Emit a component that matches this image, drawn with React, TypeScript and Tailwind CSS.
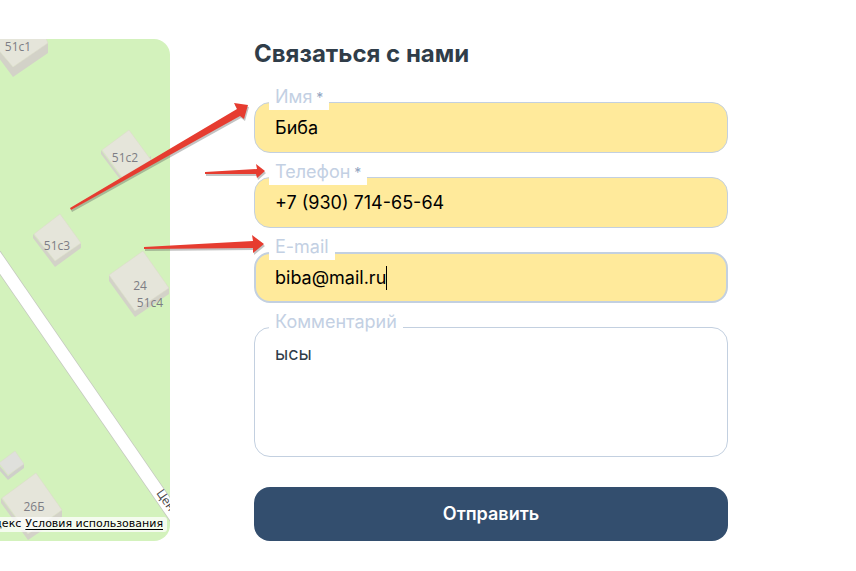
import type { ReactNode } from "react";

const labelClass =
  "absolute -top-4 left-[15px] h-6 bg-white px-1.5 text-lg leading-[22px] text-[#c3d0e3]";
const inputClass =
  "block h-[51px] w-full rounded-2xl border-[#c3d0e0] bg-[#ffea9b] text-lg text-black outline-none";

function Field({ id, label, required, children }: { id: string; label: string; required?: boolean; children: ReactNode }) {
  return (
    <div className="relative">
      {children}
      <label htmlFor={id} className={labelClass}>
        {label}
        {required && <span className="text-sm text-[#8fa3c0]"> *</span>}
      </label>
    </div>
  );
}

function House({ top, side, sideFill = "#d3d2c8", fill = "#e5e5da" }: { top: string; side: string; sideFill?: string; fill?: string }) {
  return (
    <>
      <polygon points={side} fill={sideFill} />
      <polygon points={top} fill={fill} stroke="#dcdbc9" strokeWidth="0.6" />
    </>
  );
}

function MapPanel() {
  return (
    <section aria-label="Карта" className="relative w-[170px] shrink-0 overflow-hidden rounded-r-2xl bg-[#d3f2bc]">
      <svg className="block h-[502px] w-[170px]" viewBox="0 39 170 502">
        <path d="M-6 254 L176 518" stroke="#c4c8bf" strokeWidth="14" />
        <path d="M-6 254 L176 518" stroke="#fff" strokeWidth="12.5" />
        <House side="-4,47 13,67 48,42 48,53 13,77 -4,54" top="-4,47 -4,36 45,36 48,43 13,67" />
        <House side="101,150 121,177 151,156 151,163 122,182 101,154" top="129,130 151,160 122,177 102,150" />
        <House side="33,234 55,261 81,243 81,248 55,267 33,238" top="60,214 81,243 55,261 34,234" />
        <House side="109,275 135,311 169,287 169,294 135,317 109,281" top="143,251 169,288 135,311 109,275" />
        <House side="-1,465 8,476 24,463 24,468 8,480 -1,470" top="15,451 24,464 8,475 -1,463" sideFill="#cfcfca" fill="#dfe0dc" />
        <House side="1,498 28,534 62,510 62,517 28,540 1,503" top="36,473 62,510 28,534 2,498" />
        <g fill="#7d7d84" fontFamily="Open Sans, Noto Sans, sans-serif" fontSize="12" fontWeight="500" textAnchor="middle">
          <text x="18" y="51">51с1</text>
          <text x="125" y="162">51с2</text>
          <text x="57" y="250">51с3</text>
          <text x="140" y="290">24</text>
          <text x="150" y="307">51с4</text>
          <text x="34" y="511">26Б</text>
        </g>
        <text transform="translate(156 493) rotate(55)" fill="#444" fontFamily="Open Sans, Noto Sans, sans-serif" fontSize="12">
          Цен
        </text>
      </svg>
      <div className="absolute right-[3px] bottom-[9px] flex h-[15px] items-center gap-1 rounded-[3px] bg-white/75 px-1 font-['DejaVu_Sans',sans-serif] text-[11px] whitespace-nowrap text-black">
        <span>© Яндекс</span>
        <a href="#terms" className="underline underline-offset-2">Условия использования</a>
      </div>
    </section>
  );
}

function Arrows() {
  return (
    <svg aria-hidden="true" className="pointer-events-none absolute top-0 left-0 h-[571px] w-[300px]" viewBox="0 0 300 571">
      <g fill="#555" opacity="0.35" transform="translate(1 2)">
        <path d="M70 208 L237 109 L234 103 L248 105 L244 119 L240 116 L71 210 Z" />
        <path d="M205 172 L257 169 L256 164 L265 171 L257 178 L256 174 L205 174 Z" />
        <path d="M144 247 L253 241 L252 235 L264 244 L253 253 L253 248 L144 249 Z" />
      </g>
      <g fill="#e63c30">
        <path d="M70 208 L237 109 L234 103 L248 105 L244 119 L240 116 L71 210 Z" />
        <path d="M205 172 L257 169 L256 164 L265 171 L257 178 L256 174 L205 174 Z" />
        <path d="M144 247 L253 241 L252 235 L264 244 L253 253 L253 248 L144 249 Z" />
      </g>
    </svg>
  );
}

export default function App() {
  return (
    <main className="relative flex items-start gap-[84px] bg-white pt-[39px] pr-32 pb-[30px] font-['Inter',sans-serif]">
      <MapPanel />
      <form className="min-w-0 flex-1" onSubmit={(e) => e.preventDefault()}>
        <h2 className="mb-[33px] text-2xl leading-[30px] font-bold text-[#303d49]">Связаться с нами</h2>
        <div className="flex flex-col gap-6">
          <Field id="name" label="Имя" required>
            <input id="name" type="text" defaultValue="Биба" className={`${inputClass} border px-5`} />
          </Field>
          <Field id="phone" label="Телефон" required>
            <input id="phone" type="tel" defaultValue="+7 (930) 714-65-64" className={`${inputClass} border px-5`} />
          </Field>
          <Field id="email" label="E-mail">
            <input id="email" type="email" defaultValue="biba@mail.ru" className={`${inputClass} border-2 px-[19px]`} />
            <span aria-hidden="true" className="absolute top-[14px] left-[132px] h-6 w-px bg-black" />
          </Field>
          <Field id="comment" label="Комментарий">
            <textarea
              id="comment"
              defaultValue="ысы"
              className="block h-[130px] w-full resize-none rounded-2xl border border-[#c3d0e0] px-5 py-[14px] text-lg leading-6 text-[#303d49] outline-none"
            />
          </Field>
        </div>
        <button type="submit" className="mt-[30px] block h-[54px] w-full rounded-2xl bg-[#334e6e] text-lg font-semibold text-white">
          Отправить
        </button>
      </form>
      <Arrows />
    </main>
  );
}
